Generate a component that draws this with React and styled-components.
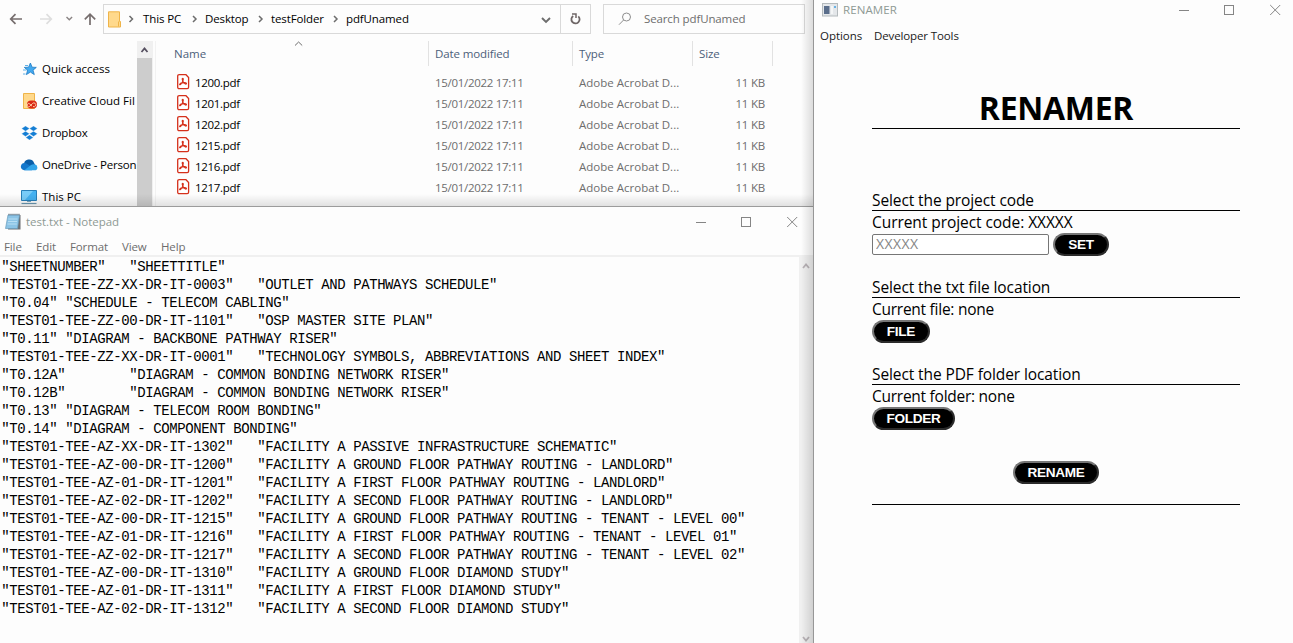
import React from "react";
import styled, { createGlobalStyle } from "styled-components";

const Global = createGlobalStyle`
  * { box-sizing: border-box; }
  body { margin: 0; background: #fdfdfd; overflow: hidden; font-family: "Open Sans", "Noto Sans", sans-serif; font-size: 11.5px; }
  svg { display: block; flex: none; }
`;

const Desktop = styled.div`
  display: flex;
  width: 1293px;
  height: 643px;
  overflow: hidden;
`;
const LeftColumn = styled.div`
  position: relative;
  display: flex;
  flex-direction: column;
  width: 814px;
  border-right: 1px solid #979797;
  &::after {
    content: "";
    position: absolute;
    inset: 0 0 0 auto;
    width: 12px;
    background: linear-gradient(to right, rgba(0, 0, 0, 0), rgba(0, 0, 0, 0.13));
    pointer-events: none;
  }
`;
const Text = styled.span`
  white-space: pre;
  line-height: 16px;
  letter-spacing: ${(p) => p.$ls ?? -0.12}px;
`;

/* File explorer */
const Explorer = styled.section`
  position: relative;
  display: flex;
  flex-direction: column;
  height: 207px;
  flex: none;
  border-bottom: 1px solid #9c9c9c;
  overflow: hidden;
  &::after {
    content: "";
    position: absolute;
    inset: auto 0 0 0;
    height: 12px;
    background: linear-gradient(rgba(0, 0, 0, 0), rgba(0, 0, 0, 0.11));
    pointer-events: none;
  }
`;
const Toolbar = styled.div`
  display: flex;
  flex: none;
  align-items: flex-start;
  height: 41px;
  padding-top: 4px;
`;
const NavIcons = styled.div`
  width: 103px;
  height: 30px;
`;
const AddressBar = styled.div`
  display: flex;
  align-items: center;
  width: 458px;
  height: 30px;
  padding-left: 4px;
  border: 1px solid #d9d9d9;
`;
const Crumb = styled.span`
  display: flex;
  align-items: center;
  width: ${(p) => p.$w}px;
`;
const CrumbArrow = styled.span`
  width: ${(p) => p.$w}px;
`;
const Spacer = styled.div`
  flex: 1;
`;
const RefreshBox = styled.div`
  display: flex;
  align-items: center;
  justify-content: center;
  width: 30px;
  height: 30px;
  border: 1px solid #d9d9d9;
  border-left: 0;
`;
const SearchBox = styled.div`
  display: flex;
  align-items: center;
  gap: 12px;
  width: 202px;
  height: 30px;
  margin-left: 12px;
  padding-left: 14px;
  border: 1px solid #d9d9d9;
  color: #6d6d6d;
`;
const Panes = styled.div`
  display: flex;
  flex: 1;
  min-height: 0;
`;
const Sidebar = styled.nav`
  width: 137px;
  padding: 12px 0 0 20px;
  overflow: hidden;
`;
const SideItem = styled.div`
  display: flex;
  align-items: center;
  gap: 4px;
  height: 32px;
`;
const SideScroll = styled.div`
  display: flex;
  flex-direction: column;
  align-items: center;
  width: 16px;
  background: #f0f0f0;
`;
const SideThumb = styled.div`
  width: 15px;
  flex: 1;
  margin-top: 5px;
  align-self: flex-start;
  background: #cdcdcd;
`;
const FileList = styled.div`
  position: relative;
  flex: 1;
  margin-left: 2px;
  border-left: 1px solid #f2f2f2;
`;
const SortMark = styled.div`
  position: absolute;
  left: 138px;
  top: 0;
`;
const HeaderRow = styled.div`
  display: flex;
  height: 25px;
  padding-left: 17px;
  margin-bottom: 6px;
`;
const HeaderCell = styled.div`
  display: flex;
  align-items: center;
  width: ${(p) => p.$w}px;
  padding-left: ${(p) => p.$pad ?? 6}px;
  border-right: 1px solid #e2e2e2;
  color: #4c607a;
`;
const FileRow = styled.div`
  display: flex;
  align-items: center;
  height: 21px;
  padding-left: 21px;
  color: #6d6d6d;
`;
const FileName = styled.div`
  display: flex;
  align-items: center;
  gap: 5px;
  width: 258px;
  color: #000;
  svg { margin-bottom: 2px; }
`;
const Cell = styled.div`
  display: flex;
  width: ${(p) => p.$w}px;
  justify-content: ${(p) => (p.$right ? "flex-end" : "flex-start")};
`;

/* Shared title bar */
const TitleBar = styled.header`
  display: flex;
  align-items: center;
  height: ${(p) => p.$h}px;
  padding-left: ${(p) => p.$pad}px;
  color: #8e9a94;
`;
const TitleText = styled(Text)`
  margin-left: ${(p) => p.$gap}px;
`;

/* Notepad */
const Notepad = styled.section`
  display: flex;
  flex-direction: column;
  flex: 1;
`;
const NoteMenu = styled.div`
  display: flex;
  height: 19px;
  padding: 3px 0 0 4px;
  gap: 14px;
  color: #6d6d6d;
`;
const MenuItem = styled(Text)`
  width: ${(p) => p.$w}px;
`;
const NoteBody = styled.div`
  display: flex;
  flex: 1;
  border-top: 2px solid #f0f0f0;
`;
const NoteText = styled.pre`
  flex: 1;
  margin: 0;
  padding: 1px 0 0 1.3px;
  font: 14px/18px "Liberation Mono", monospace;
  letter-spacing: -0.405px;
  color: #000;
`;
const NoteScroll = styled.div`
  display: flex;
  flex-direction: column;
  justify-content: space-between;
  align-items: center;
  width: 14px;
  padding: 5px 0 0;
  background: #f0f0f0;
`;

/* Renamer */
const Renamer = styled.section`
  flex: 1;
`;
const AppMenu = styled.div`
  display: flex;
  height: 32px;
  padding: 8px 0 0 6px;
  color: #1a1a1a;
`;
const Form = styled.main`
  display: flex;
  flex-direction: column;
  gap: 20px;
  width: 368px;
  margin-left: 58px;
  padding-top: 35px;
  color: #000;
`;
const Title = styled.h1`
  height: 42px;
  margin: 0 0 40px;
  border-bottom: 1px solid #000;
  font-size: 32px;
  line-height: 42px;
  letter-spacing: -0.3px;
  text-align: center;
`;
const Group = styled.div`
  display: flex;
  flex-direction: column;
`;
const Line = styled.div`
  height: 22px;
  font-size: 15.5px;
  line-height: 22px;
  letter-spacing: ${(p) => p.$ls ?? -0.1}px;
  border-bottom: ${(p) => (p.$rule ? "1px solid #000" : "0")};
`;
const Controls = styled.div`
  display: flex;
  align-items: center;
  gap: 4px;
`;
const CodeInput = styled.input`
  width: 177px;
  height: 21px;
  padding: 0 3px 2px;
  border: 1px solid #767676;
  border-radius: 2px;
  background: #fff;
  font: 14px "Open Sans", sans-serif;
  letter-spacing: 0.4px;
  &::placeholder { color: #858585; }
`;
const Pill = styled.button`
  width: ${(p) => p.$w}px;
  height: 23px;
  padding: 0;
  border: 2px solid;
  border-color: #767676 #2b2b2b #2b2b2b #767676;
  border-radius: 12px;
  background: #000;
  color: #fff;
  font: bold 13.6px/18px "Liberation Sans", Arial, sans-serif;
  letter-spacing: -0.3px;
`;
const SubmitRow = styled.div`
  display: flex;
  justify-content: center;
  height: 44px;
  margin-top: 11px;
  border-bottom: 1px solid #000;
`;

const Chevron = ({ w, h, color = "#6d6d6d", sw = 1.5, d }) => (
  <svg width={w} height={h} viewBox={`0 0 ${w} ${h}`} fill="none" stroke={color} strokeWidth={sw}>
    <path d={d} />
  </svg>
);

const NavArrows = () => (
  <svg width="103" height="30" viewBox="0 0 103 30" fill="none" strokeWidth="1.7">
    <path d="M22 15H11M15.5 10.2L10.7 15L15.5 19.8" stroke="#766e6e" />
    <path d="M40 15H51M46.5 10.2L51.3 15L46.5 19.8" stroke="#dedede" />
    <path d="M66.5 13L69.3 15.8L72.1 13" stroke="#8a8484" strokeWidth="1.4" />
    <path d="M90 21V10.5M84.8 15.4L90 10.2L95.2 15.4" stroke="#766e6e" />
  </svg>
);

const FolderIcon = () => (
  <svg width="13" height="17" viewBox="0 0 13 17">
    <path d="M.5 .8H11.5V10.5H12.5V16H.5Z" fill="#ffd98c" stroke="#efb449" />
    <path d="M10.5 15.5V10.5" stroke="#efb449" fill="none" />
  </svg>
);

const RefreshIcon = () => (
  <svg width="13" height="14" viewBox="0 0 13 14" fill="none" stroke="#6f6767" strokeWidth="1.8">
    <path d="M9.3 4.3A4.1 4.1 0 1 1 4.2 3.9" />
    <path d="M3 2H7V6" strokeWidth="1.5" />
  </svg>
);

const SearchIcon = () => (
  <svg width="14" height="14" viewBox="0 0 14 14" fill="none" stroke="#8d8d8d">
    <circle cx="8.5" cy="5" r="4" />
    <path d="M5.6 8L1 12.7" />
  </svg>
);

const PdfIcon = () => (
  <svg width="13" height="16" viewBox="0 0 13 16" fill="none" stroke="#d5301b">
    <path d="M2.2 .7H9L11.6 3.5V13.2Q11.6 14.6 10.2 14.6H2.2Q.7 14.6 .7 13.2V2.2Q.7 .7 2.2 .7Z" fill="#fff" strokeWidth="1.3" />
    <path d="M5.7 4.4C7 4.4 6.2 7.6 3.5 10.6C2 11.4 2.2 9.4 5.2 8.9C8.3 8.3 9.9 8.9 9.4 9.9C8.3 10.8 5.4 7.6 5.2 5.2Q5.1 4.4 5.7 4.4Z" strokeWidth="1.1" />
  </svg>
);

const SideIcon = ({ kind }) => (
  <svg width="18" height="18" viewBox="0 0 18 18">
    {kind === "star" && (
      <>
        <path d="M10.4 3L12.1 7.2L16.3 7.4L13 10.2L14.3 14.6L10.4 12.1L6.4 14.6L7.6 10.2L4.3 7.4L8.6 7.2Z" fill="#43a9ef" stroke="#1979c4" strokeWidth=".8" />
        <path d="M5 5.5H8M3 10H6.5M3 14H5.5" stroke="#5fb0e8" />
      </>
    )}
    {kind === "cloudfiles" && (
      <>
        <path d="M3.5 1.5H14.5V16.5H3.5Z" fill="#ffd98c" stroke="#efb449" />
        <rect x="7" y="8.5" width="10" height="8" rx="4" fill="#da2a16" />
        <path d="M12 14.2L9.9 12.1A1.6 1.6 0 1 0 9.7 14.4L12.6 11.4A1.9 1.9 0 1 1 13 14.5" fill="none" stroke="#ffd9b0" strokeWidth=".9" />
      </>
    )}
    {kind === "dropbox" && (
      <path d="M5.5 2L9.5 4.6L5.5 7.2L1.6 4.6ZM13.5 2L17.4 4.6L13.5 7.2L9.5 4.6ZM5.5 7.2L9.5 9.8L5.5 12.4L1.6 9.8ZM13.5 7.2L17.4 9.8L13.5 12.4L9.5 9.8ZM9.5 10.9L13.3 13.4L9.5 16L5.7 13.4Z" fill="#147ed4" stroke="#fdfdfd" strokeWidth=".3" />
    )}
    {kind === "onedrive" && (
      <>
        <path d="M4 9A5.2 5.2 0 0 1 14 6.7L16 11L4 13Z" fill="#0a5ea8" />
        <path d="M4.3 14.3A3.7 3.7 0 1 1 6 7.2L12 11V14.3Z" fill="#1377cb" />
        <path d="M4.3 14.3L11 9Q13.3 7.6 15.2 8.6Q17.4 9.1 17.4 11.7Q17.2 14.3 14.4 14.3Z" fill="#31a4e9" />
      </>
    )}
    {kind === "pc" && (
      <>
        <path d="M1.5 2.5H16.5V12.5H1.5Z" fill="#45b1f1" stroke="#287fb9" />
        <path d="M2 3H13L5 12H2Z" fill="#79ccf8" />
        <path d="M7 13.5H11" stroke="#7fa9c0" />
        <path d="M1.5 15.5H16.5" stroke="#6a97b1" strokeWidth="1.2" />
      </>
    )}
  </svg>
);

const NotepadIcon = () => (
  <svg width="17" height="18" viewBox="0 0 17 18">
    <path d="M4 2H15.5V16.5H3Z" fill="#6d6f72" />
    <path d="M3 2H14.5L12.5 15.5H.5Z" fill="#8cc4e6" stroke="#6c9dbd" strokeWidth=".7" />
    <path d="M3.4 6H12.5M3 8.5H12M2.6 11H11.8" stroke="#b8def3" />
    <path d="M3.5 1.5H14.5" stroke="#53616d" strokeWidth="1.6" strokeDasharray="1 1" />
  </svg>
);

const AppIcon = () => (
  <svg width="16" height="14" viewBox="0 0 16 14">
    <rect x=".5" y=".5" width="15" height="12.5" fill="#e4e7ea" stroke="#b4babd" />
    <rect x="2" y="3" width="5.5" height="8" fill="#5a6e8b" />
    <rect x="9" y="3" width="2" height="8" fill="#f4f6f7" />
    <rect x="12" y="3" width="2" height="2" fill="#69b2e5" />
  </svg>
);

const WindowButtons = () => (
  <svg width="104" height="12" viewBox="0 0 104 12" fill="none" stroke="#858585">
    <path d="M0 6.5H10" />
    <rect x="45.5" y="1.5" width="9" height="9" />
    <path d="M91.2 1L101.2 11M101.2 1L91.2 11" />
  </svg>
);

const sideItems = [
  ["star", "Quick access", -0.03],
  ["cloudfiles", "Creative Cloud Fil", 0],
  ["dropbox", "Dropbox", -0.2],
  ["onedrive", "OneDrive - Person", -0.2],
  ["pc", "This PC", 0],
];
const files = ["1200", "1201", "1202", "1215", "1216", "1217"];
const crumbs = [
  ["This PC", 62],
  ["Desktop", 66],
  ["testFolder", 75],
  ["pdfUnamed", 80],
];
const sheets = [
  ["SHEETNUMBER", "SHEETTITLE"],
  ["TEST01-TEE-ZZ-XX-DR-IT-0003", "OUTLET AND PATHWAYS SCHEDULE"],
  ["T0.04", "SCHEDULE - TELECOM CABLING"],
  ["TEST01-TEE-ZZ-00-DR-IT-1101", "OSP MASTER SITE PLAN"],
  ["T0.11", "DIAGRAM - BACKBONE PATHWAY RISER"],
  ["TEST01-TEE-ZZ-XX-DR-IT-0001", "TECHNOLOGY SYMBOLS, ABBREVIATIONS AND SHEET INDEX"],
  ["T0.12A", "DIAGRAM - COMMON BONDING NETWORK RISER"],
  ["T0.12B", "DIAGRAM - COMMON BONDING NETWORK RISER"],
  ["T0.13", "DIAGRAM - TELECOM ROOM BONDING"],
  ["T0.14", "DIAGRAM - COMPONENT BONDING"],
  ["TEST01-TEE-AZ-XX-DR-IT-1302", "FACILITY A PASSIVE INFRASTRUCTURE SCHEMATIC"],
  ["TEST01-TEE-AZ-00-DR-IT-1200", "FACILITY A GROUND FLOOR PATHWAY ROUTING - LANDLORD"],
  ["TEST01-TEE-AZ-01-DR-IT-1201", "FACILITY A FIRST FLOOR PATHWAY ROUTING - LANDLORD"],
  ["TEST01-TEE-AZ-02-DR-IT-1202", "FACILITY A SECOND FLOOR PATHWAY ROUTING - LANDLORD"],
  ["TEST01-TEE-AZ-00-DR-IT-1215", "FACILITY A GROUND FLOOR PATHWAY ROUTING - TENANT - LEVEL 00"],
  ["TEST01-TEE-AZ-01-DR-IT-1216", "FACILITY A FIRST FLOOR PATHWAY ROUTING - TENANT - LEVEL 01"],
  ["TEST01-TEE-AZ-02-DR-IT-1217", "FACILITY A SECOND FLOOR PATHWAY ROUTING - TENANT - LEVEL 02"],
  ["TEST01-TEE-AZ-00-DR-IT-1310", "FACILITY A GROUND FLOOR DIAMOND STUDY"],
  ["TEST01-TEE-AZ-01-DR-IT-1311", "FACILITY A FIRST FLOOR DIAMOND STUDY"],
  ["TEST01-TEE-AZ-02-DR-IT-1312", "FACILITY A SECOND FLOOR DIAMOND STUDY"],
];
const columnPad = (s) => s.padEnd((Math.floor(s.length / 8) + 1) * 8);
const noteText = sheets.map(([a, b]) => columnPad(`"${a}"`) + `"${b}"`).join("\n");

const ExplorerWindow = () => (
  <Explorer>
    <Toolbar>
      <NavIcons><NavArrows /></NavIcons>
      <AddressBar>
        <FolderIcon />
        <CrumbArrow $w={22}><Chevron w={22} h={10} d="M8.5 2L11.5 5L8.5 8" /></CrumbArrow>
        {crumbs.map(([name, w], i) => (
          <Crumb key={name} $w={w}>
            <Text>{name}</Text>
            <Spacer />
            {i < 3 && <Chevron w={16} h={10} d="M4 2L7 5L4 8" />}
          </Crumb>
        ))}
        <Spacer />
        <Chevron w={24} h={10} d="M6 4L10 8L14 4" sw={1.9} />
      </AddressBar>
      <RefreshBox><RefreshIcon /></RefreshBox>
      <SearchBox><SearchIcon /><Text>Search pdfUnamed</Text></SearchBox>
    </Toolbar>
    <Panes>
      <Sidebar>
        {sideItems.map(([kind, label, ls]) => (
          <SideItem key={kind}><SideIcon kind={kind} /><Text $ls={ls}>{label}</Text></SideItem>
        ))}
      </Sidebar>
      <SideScroll>
        <Chevron w={16} h={12} d="M4.5 11L7.5 7.5L10.5 11" sw={1.8} color="#565060" />
        <SideThumb />
      </SideScroll>
      <FileList>
        <SortMark><Chevron w={10} h={6} d="M1 4.5L4.6 1L8.2 4.5" sw={1} /></SortMark>
        <HeaderRow>
          <HeaderCell $w={256} $pad={1}><Text $ls={0}>Name</Text></HeaderCell>
          <HeaderCell $w={144}><Text>Date modified</Text></HeaderCell>
          <HeaderCell $w={120}><Text>Type</Text></HeaderCell>
          <HeaderCell $w={80}><Text>Size</Text></HeaderCell>
        </HeaderRow>
        {files.map((f) => (
          <FileRow key={f}>
            <FileName><PdfIcon /><Text $ls={-0.3}>{f}.pdf</Text></FileName>
            <Cell $w={144}><Text $ls={-0.3}>15/01/2022 17:11</Text></Cell>
            <Cell $w={120}><Text $ls={0.01}>Adobe Acrobat D...</Text></Cell>
            <Cell $w={66} $right><Text $ls={-0.2}>11 KB</Text></Cell>
          </FileRow>
        ))}
      </FileList>
    </Panes>
  </Explorer>
);

const NotepadWindow = () => (
  <Notepad>
    <TitleBar $h={29} $pad={5}>
      <NotepadIcon />
      <TitleText $gap={4} $ls={-0.03}>test.txt - Notepad</TitleText>
      <Spacer />
      <WindowButtons />
      <CrumbArrow $w={13} />
    </TitleBar>
    <NoteMenu>
      <MenuItem $w={18}>File</MenuItem>
      <MenuItem $w={20}>Edit</MenuItem>
      <MenuItem $w={38}>Format</MenuItem>
      <MenuItem $w={25}>View</MenuItem>
      <MenuItem $w={26}>Help</MenuItem>
    </NoteMenu>
    <NoteBody>
      <NoteText>{noteText}</NoteText>
      <NoteScroll>
        <Chevron w={10} h={8} d="M2 6L5 2.5L8 6" sw={1.8} color="#b9b3b7" />
        <Chevron w={10} h={8} d="M2 2L5 5.5L8 2" sw={1.8} color="#b9b3b7" />
      </NoteScroll>
    </NoteBody>
  </Notepad>
);

const RenamerWindow = () => (
  <Renamer>
    <TitleBar $h={20} $pad={8}>
      <AppIcon />
      <TitleText $gap={5} $ls={0.1}>RENAMER</TitleText>
      <Spacer />
      <WindowButtons />
      <CrumbArrow $w={10} />
    </TitleBar>
    <AppMenu>
      <MenuItem $w={54} $ls={-0.05}>Options</MenuItem>
      <MenuItem $w={90}>Developer Tools</MenuItem>
    </AppMenu>
    <Form>
      <Title>RENAMER</Title>
      <Group>
        <Line $rule>Select the project code</Line>
        <Line $ls={-0.06}>Current project code: XXXXX</Line>
        <Controls>
          <CodeInput placeholder="XXXXX" />
          <Pill $w={56}>SET</Pill>
        </Controls>
      </Group>
      <Group>
        <Line $rule>Select the txt file location</Line>
        <Line $ls={-0.26}>Current file: none</Line>
        <Controls><Pill $w={58}>FILE</Pill></Controls>
      </Group>
      <Group>
        <Line $rule>Select the PDF folder location</Line>
        <Line $ls={-0.26}>Current folder: none</Line>
        <Controls><Pill $w={83}>FOLDER</Pill></Controls>
      </Group>
      <SubmitRow><Pill $w={86}>RENAME</Pill></SubmitRow>
    </Form>
  </Renamer>
);

export default function App() {
  return (
    <Desktop>
      <Global />
      <LeftColumn>
        <ExplorerWindow />
        <NotepadWindow />
      </LeftColumn>
      <RenamerWindow />
    </Desktop>
  );
}
